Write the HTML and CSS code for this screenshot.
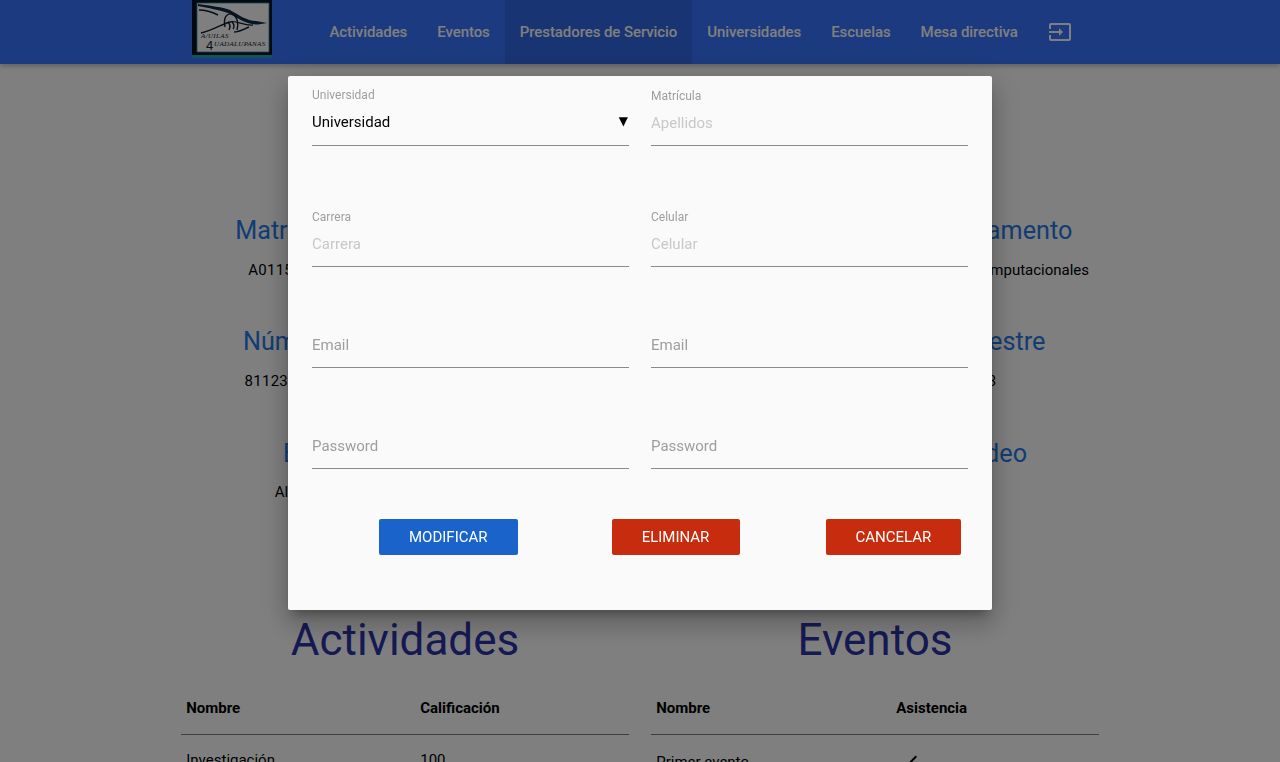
FILE: index.html
```html
<!DOCTYPE html>
<html lang="es">
<head>
<meta charset="utf-8">
<title>Prestadores de Servicio</title>
<link rel="stylesheet" href="styles.css">
</head>
<body>
<nav class="navbar">
  <a class="brand" href="#">
    <svg class="logo" viewBox="0 0 80 58" width="80" height="58" aria-label="Logo">
      <rect width="80" height="58" fill="#04141f"/>
      <rect x="0" y="55" width="80" height="3" fill="#1fa6b8"/>
      <rect x="5" y="3" width="72" height="49" fill="#fff" stroke="#2a8fb0" stroke-width="0.8"/>
      <path class="bird" d="M6 4 C20 6 30 7 38 10 C47 15 55 21 64 21 L75 23 L66 24.5 C55 25 46 18 36 13 C28 10 16 8 6 6Z"/>
      <path class="bird-line" d="M7 10 C14 10 20 12 26 15"/>
      <path class="bird-line" d="M33 27 C31 17 35 13 40 14 C45 16 47 23 45 30"/>
      <path class="bird-line" d="M61 25 C52 26 44 20 38 22 C30 24 22 30 9 33"/>
      <path class="bird-line" d="M36 22 C39 25 38 28 37 30 M40 22 C43 25 42 28 41 29"/>
      <path class="bird-line" d="M57 27 C50 30 47 32 42 32"/>
      <text class="logo-small" x="9" y="38">A/UILAS</text>
      <text class="logo-four" x="14" y="50">4</text>
      <text class="logo-small" x="22" y="46">UADALUPANAS</text>
    </svg>
  </a>
  <ul class="nav-list">
    <li><a class="nav-link" href="#">Actividades</a></li>
    <li><a class="nav-link" href="#">Eventos</a></li>
    <li><a class="nav-link is-active" href="#">Prestadores de Servicio</a></li>
    <li><a class="nav-link" href="#">Universidades</a></li>
    <li><a class="nav-link" href="#">Escuelas</a></li>
    <li><a class="nav-link" href="#">Mesa directiva</a></li>
    <li><a class="nav-link nav-icon" href="#" aria-label="Salir">
      <svg viewBox="0 0 24 24" width="24" height="24"><path d="M21 3.01H3c-1.1 0-2 .9-2 2V9h2V4.99h18v14.03H3V15H1v4.01c0 1.1.9 1.98 2 1.98h18c1.1 0 2-.88 2-1.98v-14c0-1.11-.9-2-2-2zM11 16l4-4-4-4v3H1v2h10v3z"/></svg>
    </a></li>
  </ul>
</nav>

<main class="page">
  <section class="info-grid">
    <div class="info"><h4>Matrícula</h4><p class="value-wide">A01150000</p></div>
    <div class="info"></div>
    <div class="info"><h4>Departamento</h4><p>Tecnología Computacionales</p></div>
    <div class="info"><h4>Número</h4><p class="value-wide">8112345678</p></div>
    <div class="info"></div>
    <div class="info"><h4>Semestre</h4><p>3</p></div>
    <div class="info"><h4 class="heading-shift">Estado</h4><p>Alta</p></div>
    <div class="info"></div>
    <div class="info"><h4 class="heading-nudge">Video</h4></div>
  </section>

  <section class="lists">
    <div class="list-col">
      <h2>Actividades</h2>
      <table class="data-table">
        <thead><tr><th class="col-activity">Nombre</th><th>Calificación</th></tr></thead>
        <tbody><tr><td>Investigación</td><td>100</td></tr></tbody>
      </table>
    </div>
    <div class="list-col">
      <h2>Eventos</h2>
      <table class="data-table">
        <thead><tr><th class="col-event">Nombre</th><th>Asistencia</th></tr></thead>
        <tbody><tr><td>Primer evento</td><td><svg class="check" viewBox="0 0 24 24" width="24" height="24"><path d="M9 16.2L4.8 12l-1.4 1.4L9 19 21 7l-1.4-1.4L9 16.2z"/></svg></td></tr></tbody>
      </table>
    </div>
  </section>
</main>

<div class="overlay"></div>

<section class="modal">
  <form class="form-grid">
    <div class="field field-select">
      <label for="universidad">Universidad</label>
      <select id="universidad"><option>Universidad</option></select>
      <span class="caret">▼</span>
    </div>
    <div class="field">
      <label for="matricula">Matrícula</label>
      <input id="matricula" type="text" placeholder="Apellidos">
    </div>
    <div class="field">
      <label for="carrera">Carrera</label>
      <input id="carrera" type="text" placeholder="Carrera">
    </div>
    <div class="field">
      <label for="celular">Celular</label>
      <input id="celular" type="text" placeholder="Celular">
    </div>
    <div class="field field-strong"><input type="email" placeholder="Email" aria-label="Email"></div>
    <div class="field field-strong"><input type="email" placeholder="Email" aria-label="Email"></div>
    <div class="field field-strong"><input type="password" placeholder="Password" aria-label="Password"></div>
    <div class="field field-strong"><input type="password" placeholder="Password" aria-label="Password"></div>
  </form>
  <div class="actions">
    <button class="btn btn-blue" type="button">MODIFICAR</button>
    <button class="btn btn-red btn-mid" type="button">ELIMINAR</button>
    <button class="btn btn-red btn-last" type="button">CANCELAR</button>
  </div>
</section>
</body>
</html>
```

FILE: styles.css
```css
* { box-sizing: border-box; }

html, body {
  height: 100%;
  margin: 0;
  overflow: hidden;
}

body {
  background: #fff;
  color: #000;
  font-family: Roboto, "Liberation Sans", sans-serif;
  font-size: 15px;
}

/* Nav */
.navbar {
  display: flex;
  align-items: flex-start;
  height: 64px;
  padding-left: 192px;
  background: #3874ff;
  box-shadow: 0 2px 5px rgba(0, 0, 0, .26);
}

.brand { display: block; height: 58px; }
.logo { display: block; }
.bird { fill: #0a2a44; }
.bird-line { fill: none; stroke: #0a1c2c; stroke-width: 1.4; }
.logo-small { font: italic 7px "Liberation Serif", serif; fill: #10202c; letter-spacing: .35px; }
.logo-four { font: 13px "Liberation Sans", sans-serif; fill: #10202c; }

.nav-list {
  display: flex;
  margin: 0 0 0 42.5px;
  padding: 0;
  list-style: none;
}

.nav-link {
  display: block;
  height: 64px;
  padding: 0 15px;
  color: #fff;
  font-size: 15px;
  font-weight: 500;
  letter-spacing: -.08px;
  line-height: 65px;
  text-decoration: none;
}

.nav-link.is-active { background: rgba(0, 0, 0, .1); }

.nav-icon { display: flex; align-items: center; }
.nav-icon svg { fill: #fff; margin-top: -1px; }

/* Page content */
.page { padding-top: 151px; }

.info-grid {
  display: grid;
  grid-template-columns: repeat(3, 352px);
  grid-auto-rows: 65px;
  justify-content: center;
  row-gap: 46px;
  text-align: center;
}

.info h4 {
  margin: 0 0 13px;
  color: #2478e8;
  font-size: 25.2px;
  font-weight: 400;
  line-height: 32px;
}

.info p {
  margin: 0;
  line-height: 20px;
}

.value-wide { letter-spacing: .25px; }
.info .heading-shift { margin: 1px 0 12px; padding-left: 68px; }
.info .heading-nudge { margin: 1px 0 12px; padding-left: 6px; }

.lists {
  display: grid;
  grid-template-columns: repeat(2, 470px);
  justify-content: center;
  margin-top: 113px;
}

.list-col { padding: 0 11.25px; }

.list-col h2 {
  margin: 0 0 19px;
  color: #2c34a8;
  font-size: 44px;
  font-weight: 400;
  line-height: 50px;
  text-align: center;
}

.data-table {
  width: 100%;
  border-collapse: collapse;
  table-layout: fixed;
}

.data-table thead tr { border-bottom: 1px solid rgba(0, 0, 0, .3); }

.data-table th,
.data-table td {
  padding: 15px 5px;
  font-size: 15px;
  line-height: 20px;
  text-align: left;
  vertical-align: middle;
}

.data-table th { padding: 14px 5px 16px; font-weight: 700; }
.col-activity { width: 234px; }
.col-event { width: 240px; }
.check { display: block; }

/* Modal */
.overlay {
  position: fixed;
  inset: 0;
  background: rgba(0, 0, 0, .5);
}

.modal {
  position: fixed;
  top: 76px;
  left: 288px;
  width: 704px;
  height: 534px;
  padding: 13px 24px 0;
  border-radius: 2px;
  background: #fafafa;
  box-shadow: 0 16px 24px 2px rgba(0, 0, 0, .14), 0 6px 30px 5px rgba(0, 0, 0, .12), 0 8px 10px -5px rgba(0, 0, 0, .3);
}

.form-grid {
  display: grid;
  grid-template-columns: 317px 317px;
  grid-template-rows: 77px 57px 57px 57px;
  column-gap: 22px;
  row-gap: 44px;
}

.form-grid > :nth-child(-n+2) { margin-bottom: 20px; }

.field {
  position: relative;
  display: flex;
  flex-direction: column;
  justify-content: flex-end;
}

.field label {
  height: 14px;
  color: #9e9e9e;
  font-size: 12px;
  line-height: 14px;
}

.field input,
.field select {
  width: 100%;
  height: 43px;
  padding: 0 0 2px;
  border: 0;
  border-bottom: 1px solid #8a8a8a;
  border-radius: 0;
  outline: 0;
  background: transparent;
  color: #000;
  font-family: inherit;
  font-size: 15px;
  appearance: none;
}

.field input::placeholder { color: #c8c8c8; opacity: 1; }
.field-strong input::placeholder { color: #9e9e9e; }

.field-select label { position: relative; top: -1px; }
.field-select select { padding-bottom: 4px; }

.caret {
  position: absolute;
  top: 24px;
  right: 1px;
  color: #000;
  font-family: "DejaVu Sans", sans-serif;
  font-size: 12px;
  line-height: 16px;
  pointer-events: none;
}

.actions {
  display: flex;
  gap: 94px;
  margin-top: 50px;
  padding-left: 67px;
}

.btn {
  height: 36px;
  padding: 0 30px;
  border: 0;
  border-radius: 2px;
  color: #fff;
  font-family: inherit;
  font-size: 15px;
  font-weight: 400;
  line-height: 36px;
}

.btn-mid { width: 128px; padding: 0; }
.btn-last { margin-left: -8px; }
.btn-blue { background: #1a63cb; }
.btn-red { background: #c82c0e; }
```
